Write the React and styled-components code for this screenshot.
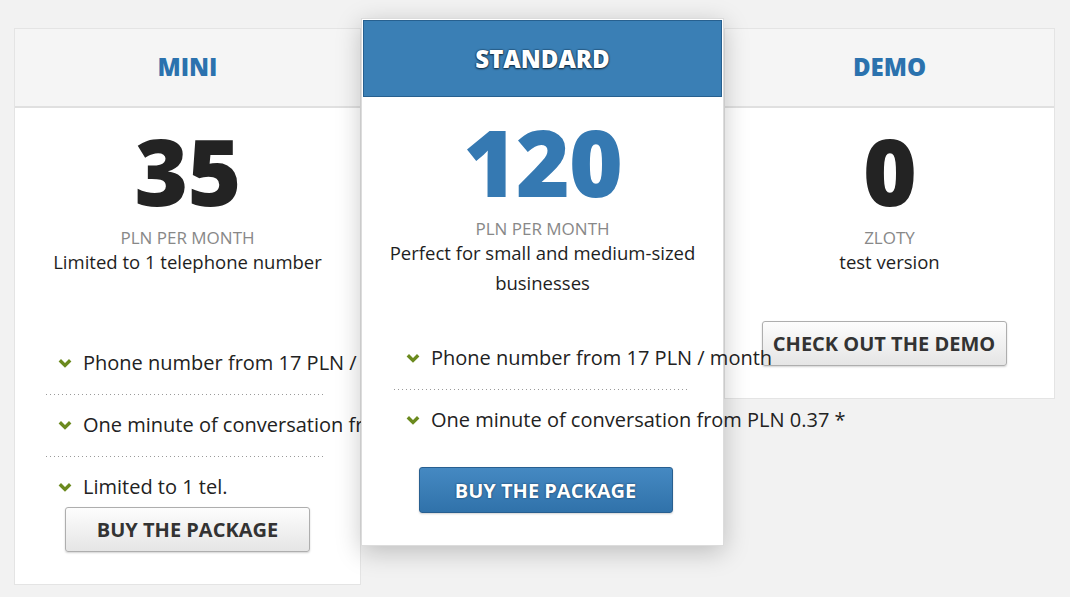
import React from "react";
import styled, { createGlobalStyle } from "styled-components";

const GlobalStyle = createGlobalStyle`
	html, body {
		margin: 0;
		padding: 0;
		background: #f2f2f2;
		font-family: "Open Sans", "Liberation Sans", sans-serif;
		color: #222;
	}
`;

const Wrapper = styled.div`
	display: flex;
	align-items: flex-start;
	padding: 28px 0 0 14px;
	height: 569px;
	overflow: hidden;
`;

const Card = styled.div`
	box-sizing: border-box;
	width: ${(p) => p.$width}px;
	background: #fff;
	border: 1px solid ${(p) => (p.$featured ? "#dcdcdc" : "#e4e4e4")};
	padding: ${(p) => (p.$featured ? "1px" : "0")};
	margin-top: ${(p) => (p.$featured ? "-10px" : "0")};
	position: ${(p) => (p.$featured ? "relative" : "static")};
	z-index: ${(p) => (p.$featured ? 1 : "auto")};
	box-shadow: ${(p) =>
		p.$featured ? "0 6px 24px rgba(0, 0, 0, 0.22)" : "none"};
	padding-bottom: ${(p) => p.$bottom}px;
`;

const Header = styled.div`
	box-sizing: border-box;
	display: flex;
	align-items: center;
	justify-content: center;
	height: ${(p) => (p.$featured ? 77 : 79)}px;
	background: ${(p) => (p.$featured ? "#3a7fb5" : "#f5f5f5")};
	border: ${(p) => (p.$featured ? "1px solid #27608f" : "none")};
	border-bottom: ${(p) =>
		p.$featured ? "1px solid #27608f" : "2px solid #e0e0e0"};
`;

const Title = styled.h2`
	margin: 0 0 ${(p) => (p.$featured ? 0 : 3)}px;
	font-size: 24px;
	font-weight: 800;
	color: ${(p) => (p.$featured ? "#fff" : "#2b72ae")};
	text-shadow: ${(p) =>
		p.$featured
			? "0 0 1px #12304d, 0 0 2px #12304d, 0 1px 2px rgba(0, 0, 0, 0.7)"
			: "none"};
`;

const Body = styled.div`
	display: flex;
	flex-direction: column;
	align-items: center;
	padding-top: ${(p) => p.$top}px;
`;

const Price = styled.div`
	font-size: 92px;
	line-height: 92px;
	font-weight: 800;
	letter-spacing: -1px;
	color: ${(p) => (p.$featured ? "#3579b2" : "#232323")};
`;

const Unit = styled.div`
	margin-top: 12px;
	font-size: 17px;
	line-height: 18px;
	color: #888;
	text-transform: uppercase;
`;

const Desc = styled.p`
	margin: 0;
	padding: 0 16px;
	font-size: 18.5px;
	line-height: 30px;
	text-align: center;
	color: #1e1e1e;
`;

const Features = styled.ul`
	align-self: stretch;
	list-style: none;
	margin: ${(p) => p.$gap}px 35px 0 31px;
	padding: 0;
`;

const Feature = styled.li`
	display: flex;
	align-items: center;
	gap: 11px;
	padding: 14px 0 17px 12px;
	font-size: 20px;
	line-height: 30px;
	white-space: nowrap;
	color: #222;
	background-image: repeating-linear-gradient(
		to right,
		#9a9a9a 0 1px,
		transparent 1px 4px
	);
	background-size: 100% 1px;
	background-position: left bottom;
	background-repeat: no-repeat;
	border-bottom: 1px solid transparent;

	&:last-child {
		background-image: none;
		border-bottom: none;
		padding-bottom: 0;
	}
`;

const Check = styled.svg`
	flex: none;
	width: 14px;
	height: 10px;
`;

const Button = styled.button`
	box-sizing: border-box;
	width: ${(p) => p.$width}px;
	height: ${(p) => (p.$primary ? 46 : 45)}px;
	margin-top: ${(p) => p.$gap}px;
	margin-left: ${(p) => p.$shift || 0}px;
	font-family: inherit;
	font-size: 20px;
	font-weight: 700;
	text-transform: uppercase;
	border-radius: 3px;
	cursor: pointer;
	color: ${(p) => (p.$primary ? "#fff" : "#333")};
	background: ${(p) =>
		p.$primary
			? "linear-gradient(#4589c2, #3072aa)"
			: "linear-gradient(#fdfdfd, #e5e5e5)"};
	border: 1px solid ${(p) => (p.$primary ? "#285f90" : "#aeaeae")};
	box-shadow: 0 1px 2px rgba(0, 0, 0, 0.18);
	text-shadow: ${(p) =>
		p.$primary ? "0 0 2px rgba(10, 40, 70, 0.9)" : "none"};
`;

const CheckIcon = () => (
	<Check viewBox="0 0 14 10">
		<polyline
			points="1.8,2.2 7,7.4 12.2,2.2"
			fill="none"
			stroke="#6b8a1e"
			strokeWidth="3.4"
		/>
	</Check>
);

const plans = [
	{
		name: "Mini",
		price: "35",
		unit: "PLN per month",
		desc: "Limited to 1 telephone number",
		features: [
			"Phone number from 17 PLN / month",
			"One minute of conversation from PLN 0.37 *",
			"Limited to 1 tel.",
		],
		width: 347,
		top: 17,
		gap: 57,
		button: { label: "Buy the package", width: 245, gap: 5 },
		bottom: 32,
	},
	{
		name: "Standard",
		featured: true,
		price: "120",
		unit: "PLN per month",
		desc: "Perfect for small and medium-sized businesses",
		features: [
			"Phone number from 17 PLN / month",
			"One minute of conversation from PLN 0.37 *",
		],
		width: 363,
		top: 19,
		gap: 31,
		button: { label: "Buy the package", width: 254, gap: 32, shift: 6 },
		bottom: 32,
	},
	{
		name: "Demo",
		price: "0",
		unit: "zloty",
		desc: "test version",
		features: [],
		width: 331,
		top: 17,
		button: { label: "Check out the demo", width: 245, gap: 44, shift: -11 },
		bottom: 32,
	},
];

export default function App() {
	return (
		<>
			<GlobalStyle />
			<Wrapper>
				{plans.map((plan) => (
					<Card
						key={plan.name}
						$width={plan.width}
						$featured={plan.featured}
						$bottom={plan.bottom}>
						<Header $featured={plan.featured}>
							<Title $featured={plan.featured}>
								{plan.name.toUpperCase()}
							</Title>
						</Header>
						<Body $top={plan.top}>
							<Price $featured={plan.featured}>{plan.price}</Price>
							<Unit>{plan.unit}</Unit>
							<Desc>{plan.desc}</Desc>
							{plan.features.length > 0 && (
								<Features $gap={plan.gap}>
									{plan.features.map((f) => (
										<Feature key={f}>
											<CheckIcon />
											{f}
										</Feature>
									))}
								</Features>
							)}
							<Button
								$primary={plan.featured}
								$width={plan.button.width}
								$gap={plan.button.gap}
								$shift={plan.button.shift}>
								{plan.button.label}
							</Button>
						</Body>
					</Card>
				))}
			</Wrapper>
		</>
	);
}
